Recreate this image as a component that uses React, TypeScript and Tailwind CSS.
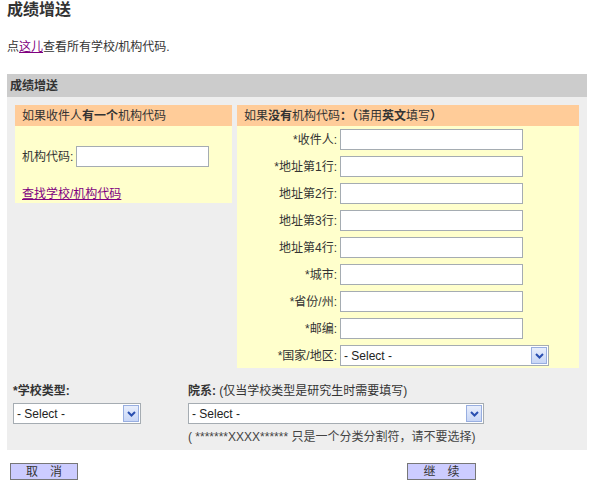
import React from "react";

const font = { fontFamily: '"Liberation Sans", "Noto Sans CJK SC", sans-serif' };

function Arrow() {
  return (
    <div className="absolute right-[1px] top-[1px] bottom-[1px] w-[16px] border border-[#98aee0] bg-gradient-to-b from-[#e8eefc] to-[#c8d6f6] flex items-center justify-center">
      <svg width="9" height="6" viewBox="0 0 9 6">
        <path d="M1 1 L4.5 4.5 L8 1" stroke="#2a4fb0" strokeWidth="2" fill="none" />
      </svg>
    </div>
  );
}

function Select({ w }: { w: string }) {
  return (
    <div className={`relative h-[21px] ${w} border border-[#a5acb2] bg-white flex items-center pl-[3px] text-[12px] text-[#222]`}>
      - Select -
      <Arrow />
    </div>
  );
}

function Row({ label, star, select }: { label: string; star?: boolean; select?: boolean }) {
  return (
    <div className="flex items-center h-[21px]">
      <div className="w-[103px] text-right text-[12px] text-[#333] pr-[3px]">
        {star && <span>*</span>}
        {label}:
      </div>
      {select ? (
        <Select w="w-[209px]" />
      ) : (
        <div className="w-[183px] h-[21px] border border-[#a5acb2] bg-white" />
      )}
    </div>
  );
}

export default function App() {
  return (
    <div style={font} className="w-[591px] h-[485px] bg-white text-[#333] px-[7px] overflow-hidden">
      <div className="text-[16px] font-bold leading-[20px] pt-0">成绩增送</div>
      <div className="text-[12px] leading-[16px] mt-[19px]">
        点<span className="text-[#800080] underline">这儿</span>查看所有学校/机构代码.
      </div>
      <div className="mt-[19px] w-[580px]">
        <div className="h-[23px] bg-[#cccccc] flex items-center pl-[3px] text-[12px] font-bold">成绩增送</div>
        <div className="bg-[#eeeeee] pt-[8px] pb-0">
          <div className="flex items-start pl-[8px]">
            <div className="w-[217px]">
              <div className="h-[21px] bg-[#ffcc99] flex items-center pl-[7px] text-[12px]">
                如果收件人<b>有一个</b>机构代码
              </div>
              <div className="bg-[#ffffcc] h-[77px] pl-[7px] pt-[20px]">
                <div className="flex items-center text-[12px]">
                  机构代码:
                  <div className="ml-[3px] w-[133px] h-[21px] border border-[#a5acb2] bg-white" />
                </div>
                <div className="mt-[20px] text-[12px] text-[#800080] underline leading-[14px]">查找学校/机构代码</div>
              </div>
            </div>
            <div className="ml-[5px] w-[342px]">
              <div className="h-[21px] bg-[#ffcc99] flex items-center pl-[7px] text-[12px]">
                如果<b>没有</b>机构代码<b>：（</b>请用<b>英文</b>填写<b>）</b>
              </div>
              <div className="bg-[#ffffcc] pt-[3px] pb-[2px] flex flex-col gap-[6px]">
                <Row label="收件人" star />
                <Row label="地址第1行" star />
                <Row label="地址第2行" />
                <Row label="地址第3行" />
                <Row label="地址第4行" />
                <Row label="城市" star />
                <Row label="省份/州" star />
                <Row label="邮编" star />
                <Row label="国家/地区" star select />
              </div>
            </div>
          </div>
          <div className="flex pl-[6px] mt-[16px] pb-[6px] text-[12px]">
            <div className="w-[175px]">
              <div className="leading-[14px] font-bold">*学校类型:</div>
              <div className="mt-[5px]">
                <Select w="w-[128px]" />
              </div>
            </div>
            <div>
              <div className="leading-[14px]">
                <b>院系:</b> (仅当学校类型是研究生时需要填写)
              </div>
              <div className="mt-[5px]">
                <Select w="w-[296px]" />
              </div>
              <div className="mt-[6px] leading-[14px] text-[#444]">( *******XXXX****** 只是一个分类分割符，请不要选择)</div>
            </div>
          </div>
        </div>
      </div>
      <div className="flex mt-[13px] pl-[3px]">
        <div className="w-[68px] h-[17px] bg-[#ccccff] border border-[#777] flex items-center justify-center text-[12px] tracking-[12px] pl-[12px] text-[#333]">取消</div>
        <div className="ml-[329px] w-[69px] h-[17px] bg-[#ccccff] border border-[#777] flex items-center justify-center text-[12px] tracking-[12px] pl-[12px] text-[#333]">继续</div>
      </div>
    </div>
  );
}
